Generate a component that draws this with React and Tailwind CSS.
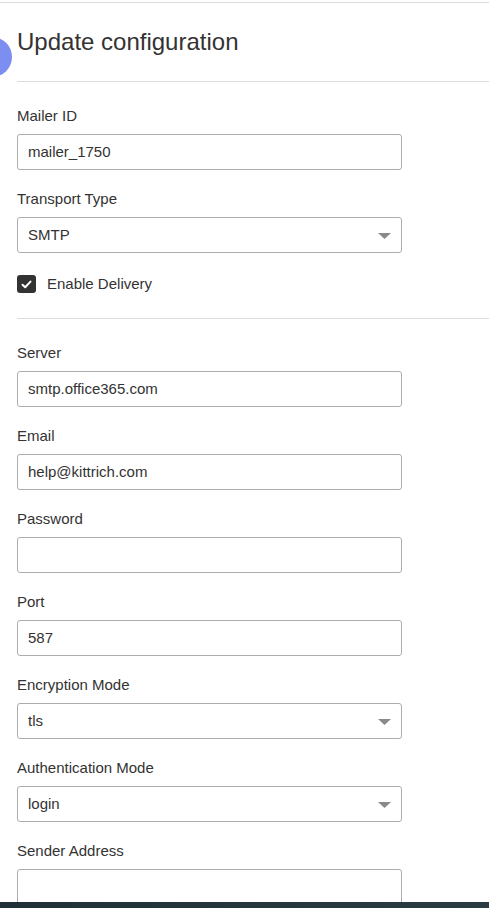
import { useState } from 'react'

const Field = ({ label, value = '', select = false }) => (
    <div className="mb-[19px]">
        <label className="block text-[15px] leading-5 text-[#333] mb-2">{label}</label>
        <div className="relative w-[385px] h-9 border border-[#adadad] rounded-[3px] bg-white flex items-center px-[10px] text-[15px] text-[#333]">
            <span>{value}</span>
            {select && (
                <svg className="absolute right-[10px] top-[15px]" width="13" height="6" viewBox="0 0 13 6">
                    <path d="M0 0 L13 0 L6.5 6 Z" fill="#8a8a8a" />
                </svg>
            )}
        </div>
    </div>
)

const App = () => {
    const [enabled, setEnabled] = useState(true)

    return (
        <div className="relative h-[908px] w-full overflow-hidden bg-white" style={{ fontFamily: '"Liberation Sans", Arial, sans-serif' }}>
            <div className="pt-[2px]">
                <div className="border-t border-[#dcdcdc]" />
            </div>
            <div className="absolute left-[-28px] top-[37px] w-10 h-10 rounded-full bg-[#7d8ef1]" />
            <div className="pl-[17px]">
                <h1 className="mt-[26px] text-[24px] leading-[26px] text-[#333] font-normal">Update configuration</h1>
                <div className="mt-[26px] border-t border-[#dcdcdc]" />

                <div className="mt-6">
                    <Field label="Mailer ID" value="mailer_1750" />
                    <div className="mb-[21px]">
                        <label className="block text-[15px] leading-5 text-[#333] mb-2">Transport Type</label>
                        <div className="relative w-[385px] h-9 border border-[#adadad] rounded-[3px] bg-white flex items-center px-[10px] text-[15px] text-[#333]">
                            <span>SMTP</span>
                            <svg className="absolute right-[10px] top-[15px]" width="13" height="6" viewBox="0 0 13 6">
                                <path d="M0 0 L13 0 L6.5 6 Z" fill="#8a8a8a" />
                            </svg>
                        </div>
                    </div>
                    <div className="flex items-center h-5">
                        <button
                            type="button"
                            onClick={() => setEnabled((v) => !v)}
                            className="w-[19px] h-[18px] rounded-[3px] bg-[#333] flex items-center justify-center"
                        >
                            {enabled && (
                                <svg width="11" height="9" viewBox="0 0 11 9">
                                    <path d="M1.5 4.8 L4.2 7.3 L9.5 1.6" stroke="#fff" strokeWidth="2" fill="none" strokeLinecap="round" strokeLinejoin="round" />
                                </svg>
                            )}
                        </button>
                        <span className="ml-[11px] text-[15px] text-[#333]">Enable Delivery</span>
                    </div>
                </div>

                <div className="mt-6 border-t border-[#dcdcdc]" />

                <div className="mt-6">
                    <Field label="Server" value="smtp.office365.com" />
                    <Field label="Email" value="help@kittrich.com" />
                    <Field label="Password" />
                    <Field label="Port" value="587" />
                    <Field label="Encryption Mode" value="tls" select />
                    <Field label="Authentication Mode" value="login" select />
                    <Field label="Sender Address" />
                </div>
            </div>
            <div className="absolute left-0 right-0 bottom-0 h-[6px] bg-gradient-to-r from-[#1f3038] to-[#2a3c42]" />
        </div>
    )
}

export default App
